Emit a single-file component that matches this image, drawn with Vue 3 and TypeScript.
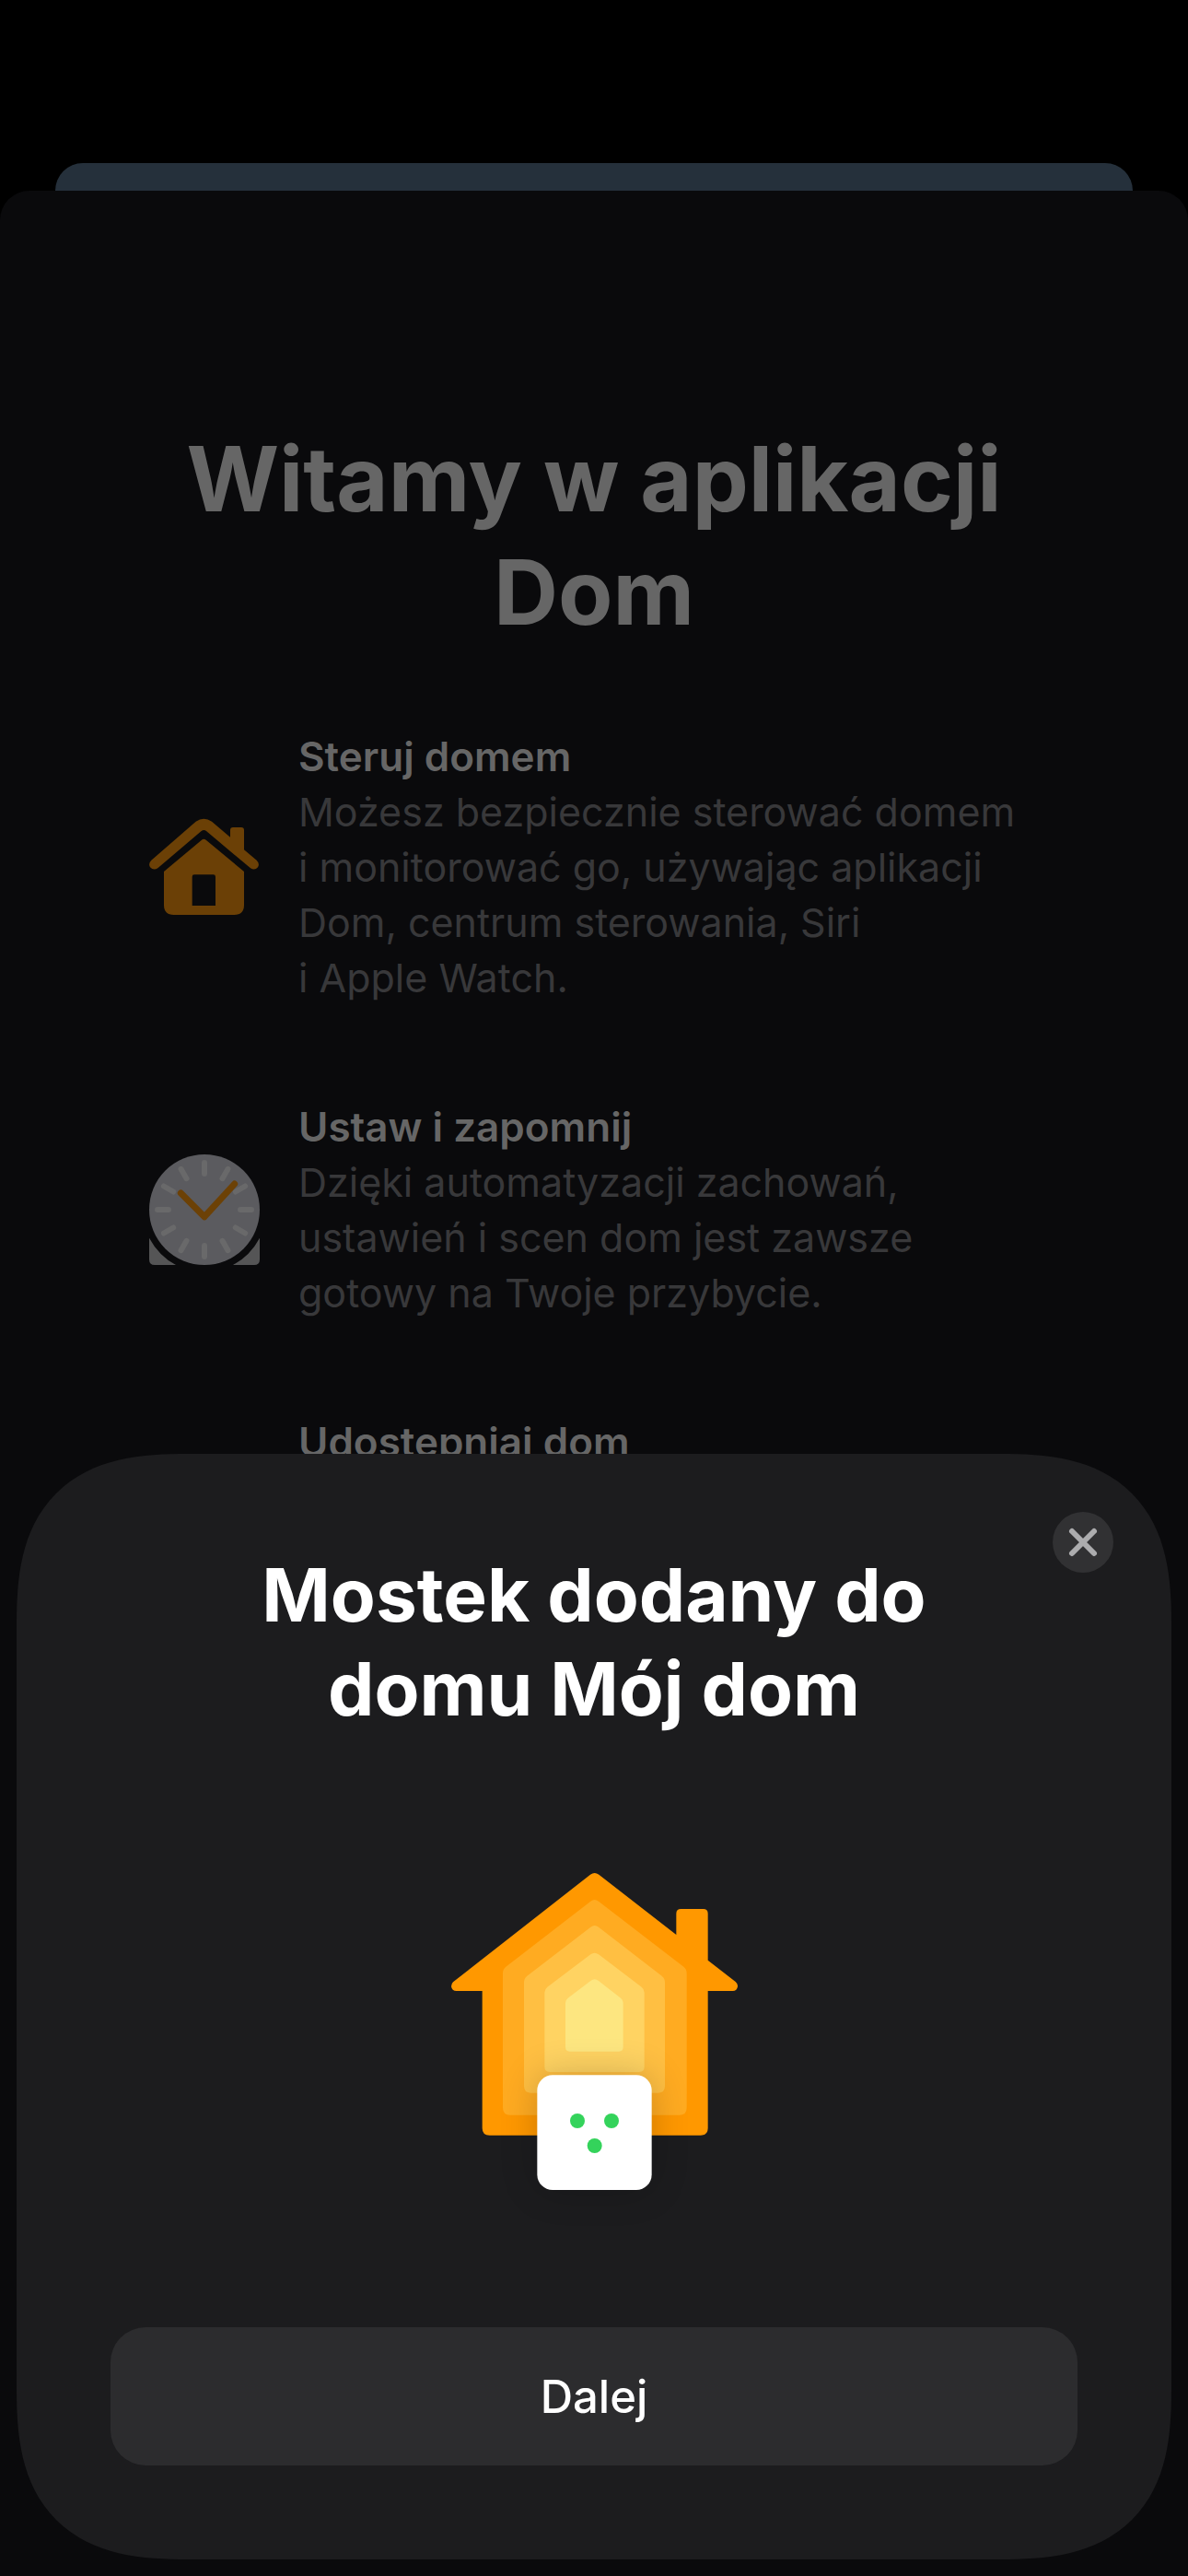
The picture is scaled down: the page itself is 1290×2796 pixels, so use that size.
<script setup lang="ts">
interface Feature {
  icon: 'house' | 'clock' | 'none'
  title: string
  text: string
}

const features: Feature[] = [
  {
    icon: 'house',
    title: 'Steruj domem',
    text: 'Możesz bezpiecznie sterować domem i\u00a0monitorować go, używając aplikacji Dom, centrum sterowania, Siri i\u00a0Apple\u00a0Watch.',
  },
  {
    icon: 'clock',
    title: 'Ustaw i zapomnij',
    text: 'Dzięki automatyzacji zachowań, ustawień i\u00a0scen dom jest zawsze gotowy na Twoje przybycie.',
  },
  { icon: 'none', title: 'Udostępniaj dom', text: '' },
]

const ticks: number[] = Array.from({ length: 12 }, (_, i) => i * 30)
</script>

<template>
  <div class="screen">
    <div class="backdrop">
      <div class="sheet-behind"></div>
      <main class="sheet">
        <h1 class="welcome">Witamy w aplikacji Dom</h1>
        <ul class="features">
          <li v-for="item in features" :key="item.title" class="feature">
            <svg v-if="item.icon === 'house'" class="icon" viewBox="66 303 360 360" aria-hidden="true">
              <g fill="#6b4006">
                <path d="M218 335Q244 318 270 335L330 386V363Q330 354 339 354H366Q375 354 375 363V427L416 461Q427 472 420 484Q410 496 396 487L252 366Q244 360 236 366L94 487Q80 496 69 484Q62 472 73 461Z" />
                <path fill-rule="evenodd" d="M236 396Q244 389 252 396L375 498V607Q375 639 343 639H146Q114 639 114 607V498ZM213 508Q206 508 206 515V609H282V515Q282 508 275 508Z" />
              </g>
            </svg>
            <svg v-else-if="item.icon === 'clock'" class="icon" viewBox="66 219 360 360" aria-hidden="true">
              <path fill="#555556" d="M66 491Q98 550 153 579H84Q66 579 66 561ZM426 491Q394 550 339 579H408Q426 579 426 561Z" />
              <circle cx="246" cy="399" r="180" fill="#5b5b5f" />
              <g stroke="#69696a" stroke-width="18" stroke-linecap="round">
                <line v-for="a in ticks" :key="a" x1="246" y1="246" x2="246" y2="282" :transform="`rotate(${a} 246 399)`" />
              </g>
              <path d="M169 345L246 422L344 315" fill="none" stroke="#6c4106" stroke-width="21" stroke-linecap="round" stroke-linejoin="round" />
            </svg>
            <span v-else class="icon"></span>
            <div class="copy">
              <h2>{{ item.title }}</h2>
              <p v-if="item.text">{{ item.text }}</p>
            </div>
          </li>
        </ul>
      </main>
    </div>

    <section class="card" role="dialog" aria-labelledby="card-title">
      <button class="close" type="button" aria-label="Zamknij">
        <svg viewBox="0 0 66 66" aria-hidden="true">
          <path d="M21 21L45 45M45 21L21 45" stroke="#acacae" stroke-width="6" stroke-linecap="round" />
        </svg>
      </button>
      <h2 id="card-title" class="card-title">Mostek dodany do domu Mój dom</h2>
      <svg class="hero" viewBox="60 99 933 1032" aria-hidden="true">
        <defs>
          <filter id="soft" x="-100%" y="-100%" width="300%" height="300%">
            <feGaussianBlur stdDeviation="60" />
          </filter>
        </defs>
        <path fill="#ff9800" d="M513 104Q527 94 541 104L793 300V231Q793 216 808 216H881Q896 216 896 231V383L986 453Q994 460 993 468Q991 483 977 483H896V930Q896 953 872 953H185Q161 953 161 930V483H77Q62 483 60 468Q60 460 66 454Z" />
        <path fill="#ffab21" d="M514 191Q527 181 540 191L817 404Q827 412 827 425V863Q827 887 803 887H252Q228 887 228 863V425Q228 412 238 404Z" />
        <path fill="#ffbf42" d="M514 275Q527 265 540 275L746 434Q756 442 756 455V793Q756 815 734 815H319Q297 815 297 793V455Q297 442 307 434Z" />
        <path fill="#ffd362" d="M514 364Q527 354 540 364L680 470Q689 477 689 488V730Q689 747 672 747H381Q364 747 364 730V488Q364 477 373 470Z" />
        <path fill="#fde680" d="M515 449Q527 440 539 449L612 506Q620 512 620 522V666Q620 680 606 680H446Q432 680 432 666V522Q432 512 440 506Z" />
        <rect x="340" y="757" width="373" height="374" rx="50" fill="#000" opacity=".2" filter="url(#soft)" />
        <rect x="340" y="757" width="373" height="374" rx="50" fill="#fff" />
        <g fill="#34d35b">
          <circle cx="471" cy="906" r="24" />
          <circle cx="582" cy="906" r="24" />
          <circle cx="527" cy="987" r="24" />
        </g>
      </svg>
      <button class="next" type="button">Dalej</button>
    </section>
  </div>
</template>

<style>
body {
  margin: 0;
  background: #000;
}
</style>

<style scoped>
.screen {
  display: grid;
  min-height: 100vh;
  background: #000;
  font-family: Inter, 'Liberation Sans', sans-serif;
}

.backdrop,
.card {
  grid-area: 1 / 1;
}

.backdrop {
  display: flex;
  flex-direction: column;
  padding-top: 177px;
}

.sheet-behind {
  height: 30px;
  margin: 0 60px;
  border-radius: 30px 30px 0 0;
  background: #25303b;
}

.sheet {
  flex: 1;
  padding: 251px 162px 0;
  border-radius: 32px 32px 0 0;
  background: #0a0a0c;
}

h1,
h2,
p,
ul {
  margin: 0;
  padding: 0;
}

.welcome {
  color: #666;
  font-size: 97px;
  font-weight: 700;
  line-height: 123px;
  text-align: center;
}

.features {
  display: flex;
  flex-direction: column;
  gap: 102px;
  margin-top: 87px;
  list-style: none;
}

.feature {
  display: flex;
  align-items: center;
  gap: 42px;
}

.icon {
  flex: none;
  width: 120px;
  height: 120px;
}

span.icon {
  height: 0;
}

.copy {
  flex: 1;
  line-height: 60px;
}

.copy h2 {
  color: #666;
  font-size: 44px;
  font-weight: 600;
}

.copy p {
  max-width: 792px;
  color: #38383a;
  font-size: 43px;
}

.card {
  position: relative;
  display: flex;
  flex-direction: column;
  align-items: center;
  align-self: end;
  margin: 18px;
  padding: 102px;
  border-radius: 147px;
  background: #1c1c1e;
}

@supports (corner-shape: superellipse(1.4)) {
  .card {
    border-radius: 186px;
    corner-shape: superellipse(1.4);
  }
}

.card-title {
  max-width: 800px;
  color: #fff;
  font-size: 80px;
  font-weight: 700;
  line-height: 102px;
  text-align: center;
}

.close {
  position: absolute;
  top: 63px;
  right: 63px;
  width: 66px;
  height: 66px;
  padding: 0;
  border: 0;
  border-radius: 50%;
  background: #313133;
}

.close svg {
  display: block;
}

.hero {
  width: 311px;
  height: 344px;
  margin: 149px 0;
  overflow: visible;
}

.next {
  width: 100%;
  height: 150px;
  padding: 2px 0 0;
  border: 0;
  border-radius: 38px;
  background: #2c2c2e;
  color: #fff;
  font-family: inherit;
  font-size: 49px;
  font-weight: 500;
  line-height: 60px;
}
</style>
